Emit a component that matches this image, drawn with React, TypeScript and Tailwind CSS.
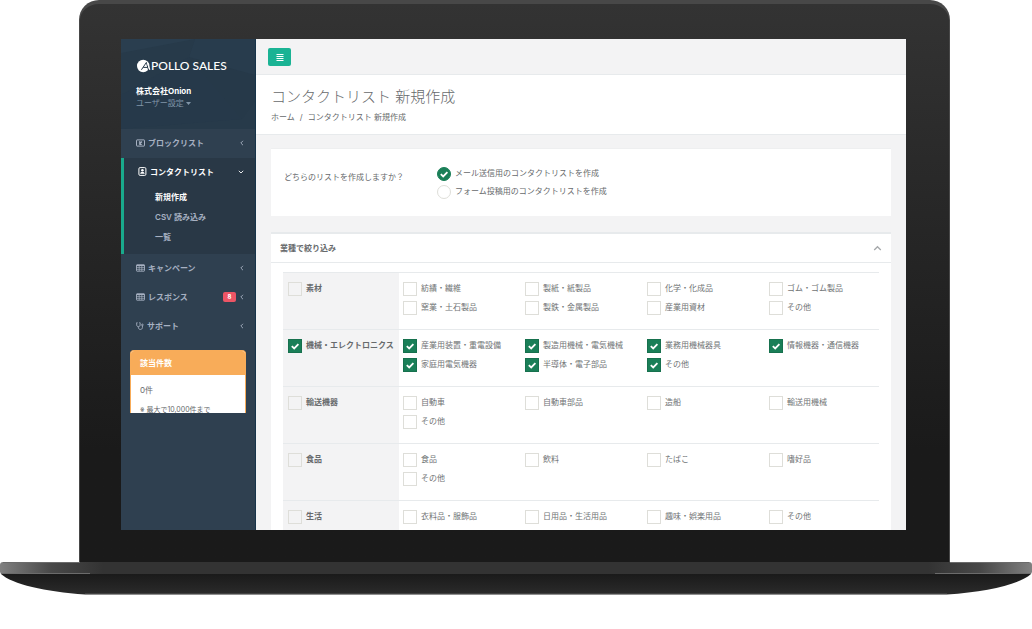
import React from "react";

type Category = {
  name: string;
  checked?: boolean;
  items: string[];
};

const categories: Category[] = [
  {
    name: "素材",
    items: ["紡績・繊維", "製紙・紙製品", "化学・化成品", "ゴム・ゴム製品", "窯業・土石製品", "製鉄・金属製品", "産業用資材", "その他"],
  },
  {
    name: "機械・エレクトロニクス",
    checked: true,
    items: ["産業用装置・重電設備", "製造用機械・電気機械", "業務用機械器具", "情報機器・通信機器", "家庭用電気機器", "半導体・電子部品", "その他"],
  },
  { name: "輸送機器", items: ["自動車", "自動車部品", "造船", "輸送用機械", "その他"] },
  { name: "食品", items: ["食品", "飲料", "たばこ", "嗜好品", "その他"] },
  { name: "生活", items: ["衣料品・服飾品", "日用品・生活用品", "趣味・娯楽用品", "その他"] },
];

function Tick() {
  return (
    <svg
      viewBox="0 0 14 14"
      className="pointer-events-none absolute inset-0 hidden size-full peer-checked:block"
      fill="none"
      stroke="#fff"
      strokeWidth="1.8"
      aria-hidden="true"
    >
      <path d="M3.8 7.1 6.2 9.4 10.4 5.2" />
    </svg>
  );
}

function CheckItem({ label, checked }: { label: string; checked?: boolean }) {
  return (
    <label className="flex items-start gap-1 whitespace-nowrap">
      <span className="relative size-3.5 shrink-0">
        <input
          type="checkbox"
          defaultChecked={checked}
          className="peer block size-3.5 appearance-none border border-[#deded9] checked:border-[#17714e] checked:bg-[#1a7f58]"
        />
        <Tick />
      </span>
      <span className="leading-3">{label}</span>
    </label>
  );
}

function RadioItem({ label, checked }: { label: string; checked?: boolean }) {
  return (
    <label className="flex items-start gap-1 whitespace-nowrap">
      <span className="relative size-3.5 shrink-0">
        <input
          type="radio"
          name="list-type"
          defaultChecked={checked}
          className="peer block size-3.5 appearance-none rounded-full border border-[#deded9] checked:border-[#1a7f58] checked:bg-[#1a7f58]"
        />
        <Tick />
      </span>
      <span className="leading-3">{label}</span>
    </label>
  );
}

function Chevron({ open }: { open?: boolean }) {
  return (
    <svg viewBox="0 0 6 6" className="size-1.5 shrink-0" fill="none" stroke="currentColor" strokeWidth="0.9" aria-hidden="true">
      <path d={open ? "M.8 1.8 3 4 5.2 1.8" : "M4 .8 1.8 3 4 5.2"} />
    </svg>
  );
}

function BlockIcon() {
  return (
    <svg viewBox="0 0 9 8" className="h-2 w-[9px] shrink-0" fill="none" stroke="currentColor" aria-hidden="true">
      <rect x=".5" y=".9" width="8" height="6.2" rx=".5" />
      <path d="M3.2 2.6 5.8 5.4M5.8 2.6 3.2 5.4" strokeWidth="1.5" />
    </svg>
  );
}

function AddressIcon() {
  return (
    <svg viewBox="0 0 9 9" className="size-[9px] shrink-0" fill="none" stroke="currentColor" aria-hidden="true">
      <rect x=".9" y=".6" width="7" height="7.8" rx="1.2" />
      <circle cx="4.4" cy="3.3" r="1.3" fill="currentColor" stroke="none" />
      <path d="M2.2 6.8c0-2.8 4.4-2.8 4.4 0z" fill="currentColor" stroke="none" />
    </svg>
  );
}

function TableIcon() {
  return (
    <svg viewBox="0 0 9 8" className="h-2 w-[9px] shrink-0" fill="none" stroke="currentColor" aria-hidden="true">
      <rect x=".5" y=".8" width="8" height="6.4" rx=".5" strokeWidth=".9" />
      <path d="M.5 1.4h8" strokeWidth="1.2" />
      <path d="M3.2 1v6M5.8 1v6M.5 3.4h8M.5 5.3h8" strokeWidth=".7" />
    </svg>
  );
}

function SupportIcon() {
  return (
    <svg viewBox="0 0 8 8" className="size-2 shrink-0" fill="none" stroke="currentColor" strokeWidth=".9" aria-hidden="true">
      <path d="M1.5.7H.7v2.2c0 2.4 3.4 2.4 3.4 0V.7h-.8M2.4 4.7v.8c0 2.6 4 2.6 4 0V3.8" />
      <circle cx="6.4" cy="2.9" r=".8" />
    </svg>
  );
}

function NavLink({ icon, label, badge }: { icon: React.ReactNode; label: string; badge?: string }) {
  return (
    <a href="#" className="flex h-[29px] items-center gap-[3px] pr-2.5 pb-0.5 pl-[15px] font-semibold">
      {icon}
      <span className="flex-1">{label}</span>
      {badge && (
        <span className="flex h-2.5 w-[13px] items-center justify-center rounded-xs bg-[#ed5565] text-[6px] font-bold text-white">
          {badge}
        </span>
      )}
      <Chevron />
    </a>
  );
}

function Sidebar() {
  return (
    <aside className="flex w-[135px] shrink-0 flex-col border-r border-[#17344a] bg-[#2f4050] text-[#a7b1c2]">
      <header className="relative h-[90px] overflow-hidden bg-[#273a4a] pt-[19px] pl-[15px]">
        <svg viewBox="0 0 134 90" preserveAspectRatio="none" className="absolute inset-0 size-full" aria-hidden="true">
          <path d="M0 14 74 0H0z" fill="#2a3e4f" />
          <path d="M74 0 68 18 121 80 134 62V0z" fill="#263949" />
          <path d="M68 18 134 36V0H74z" fill="#283c4d" />
          <path d="M0 90 121 80 68 18 0 56z" fill="#26394a" />
        </svg>
        <div className="relative">
          <a href="#" className="flex h-4 items-center text-white">
            <svg viewBox="0 0 15 14" className="h-3.5 w-[15px]" aria-hidden="true">
              <circle cx="7.2" cy="7" r="6.2" fill="#fff" />
              <path d="M5.4 10.8 10.4 3.4 12.4 10.8M7.2 8.4h4.6" fill="none" stroke="#273a4a" strokeWidth="1" />
              <path d="M11.4 3.4 13.8 10.8" fill="none" stroke="#fff" strokeWidth="1.2" />
            </svg>
            <span className="font-['Lato','Noto_Sans_CJK_JP',sans-serif] text-xs leading-4 font-medium">POLLO SALES</span>
          </a>
          <p className="mt-[11px] leading-3 font-bold text-white">株式会社Onion</p>
          <button type="button" className="flex items-center gap-0.5 leading-3 text-[#8095a8]">
            ユーザー設定
            <svg viewBox="0 0 5 3" className="h-[3px] w-[5px]" fill="currentColor" aria-hidden="true">
              <path d="M0 0h5L2.5 3z" />
            </svg>
          </button>
        </div>
      </header>
      <nav>
        <NavLink icon={<BlockIcon />} label="ブロックリスト" />
        <div className="h-24 border-l-3 border-[#19aa8d] bg-[#293846]">
          <a href="#" className="flex h-[29px] items-center gap-[3px] pr-[11px] pb-0.5 pl-3.5 font-bold text-white">
            <AddressIcon />
            <span className="flex-1">コンタクトリスト</span>
            <Chevron open />
          </a>
          <ul className="pl-[31px] leading-5 font-semibold">
            <li><a href="#" className="font-bold text-white">新規作成</a></li>
            <li><a href="#">CSV 読み込み</a></li>
            <li><a href="#">一覧</a></li>
          </ul>
        </div>
        <NavLink icon={<TableIcon />} label="キャンペーン" />
        <NavLink icon={<TableIcon />} label="レスポンス" badge="8" />
        <NavLink icon={<SupportIcon />} label="サポート" />
      </nav>
      <section className="mx-[9px] mt-[9px] h-[63px] shrink-0 overflow-hidden rounded-t-sm border-x border-t border-[#f8ac59] bg-white text-[#676a6c]">
        <h2 className="bg-[#f8ac59] pl-[9px] leading-6 font-bold text-white">該当件数</h2>
        <p className="mt-[9px] pl-[9px] leading-3">0件</p>
        <p className="mt-2 pl-[9px] text-[7px] leading-3">※ 最大で10,000件まで</p>
      </section>
    </aside>
  );
}

function Content() {
  return (
    <main className="min-w-0 flex-1 bg-[#f3f3f4] text-[#676a6c]">
      <div className="border-b border-[#e7eaec] px-3 pt-[9px] pb-2">
        <button
          type="button"
          aria-label="メニュー"
          className="flex h-[18px] w-[23px] items-center justify-center rounded-xs bg-[#1ab394] text-white"
        >
          <svg viewBox="0 0 8 8" className="size-2" fill="currentColor" aria-hidden="true">
            <path d="M.5 1h7v1h-7zM.5 3h7v1h-7zM.5 5h7v1h-7zM.5 7h7v1h-7z" />
          </svg>
        </button>
      </div>
      <div className="h-[60px] border-b border-[#e7eaec] bg-white px-[15px] pt-3">
        <h1 className="text-[15px] leading-5 font-light">コンタクトリスト 新規作成</h1>
        <nav className="mt-1 flex gap-[5px] leading-3">
          <a href="#">ホーム</a>
          <span>/</span>
          <span>コンタクトリスト 新規作成</span>
        </nav>
      </div>
      <div className="flex flex-col gap-4 p-[15px] pt-[13px]">
        <fieldset className="flex h-[68px] border-t border-[#eeeff0] bg-white px-[13px]">
          <span className="w-[153px] pt-[22px] leading-3">どちらのリストを作成しますか？</span>
          <div className="flex flex-col gap-1 pt-[18px]">
            <RadioItem label="メール送信用のコンタクトリストを作成" checked />
            <RadioItem label="フォーム投稿用のコンタクトリストを作成" />
          </div>
        </fieldset>
        <section className="border-t-2 border-[#e7eaec] bg-white">
          <header className="flex h-[29px] items-center justify-between border-b border-[#e7eaec] px-[9px]">
            <h2 className="leading-3 font-bold">業種で絞り込み</h2>
            <button type="button" aria-label="折りたたむ" className="text-[#a5a8aa]">
              <svg viewBox="0 0 9 6" className="h-1.5 w-[9px]" fill="none" stroke="currentColor" strokeWidth="1.3" aria-hidden="true">
                <path d="M1.2 5 4.5 1.7 7.8 5" />
              </svg>
            </button>
          </header>
          <div className="px-3 py-[9px]">
            <table className="w-full table-fixed border-separate border-spacing-0">
              <tbody>
                {categories.map((category) => (
                  <tr key={category.name} className="h-[57px]">
                    <th className="w-[116px] border-t border-[#e7eaec] bg-[#f3f3f4] px-[5px] pt-[9px] text-left align-top font-bold">
                      <CheckItem label={category.name} checked={category.checked} />
                    </th>
                    <td className="border-t border-[#e7eaec] pt-[9px] pl-1 align-top text-[#707375]">
                      <div className="-mr-3 grid grid-cols-4 gap-y-[5px]">
                        {category.items.map((item) => (
                          <CheckItem key={item} label={item} checked={category.checked} />
                        ))}
                      </div>
                    </td>
                  </tr>
                ))}
              </tbody>
            </table>
          </div>
        </section>
      </div>
    </main>
  );
}

function LaptopBase() {
  return (
    <svg viewBox="0 0 1032 33" preserveAspectRatio="none" className="block h-[33px] w-full" aria-hidden="true">
      <defs>
        <linearGradient id="bar">
          <stop offset="0" stopColor="#808080" />
          <stop offset=".05" stopColor="#484848" />
          <stop offset=".1" stopColor="#333333" />
          <stop offset=".9" stopColor="#333333" />
          <stop offset=".95" stopColor="#484848" />
          <stop offset="1" stopColor="#808080" />
        </linearGradient>
        <linearGradient id="underside" x2="0" y2="1">
          <stop offset="0" stopColor="#1a1a1a" />
          <stop offset="1" stopColor="#2b2b2b" />
        </linearGradient>
      </defs>
      <path d="M1 12C12 22 45 30 85 32.4H947C987 30 1020 22 1031 12z" fill="url(#underside)" />
      <path d="M85 32.2H947" stroke="#8a8a8a" strokeWidth=".8" />
      <path d="M3 0H1029Q1032 0 1032 3V10L1031 12H1L0 10V3Q0 0 3 0z" fill="url(#bar)" />
      <path d="M3 .5H80M950 .5H1029M1 11.5H90M935 11.5H1031" stroke="#6b6b6b" />
    </svg>
  );
}

export default function App() {
  return (
    <div className="min-h-screen bg-white font-['Inter','Noto_Sans_CJK_JP',sans-serif] text-[8px]" lang="ja">
      <div className="mr-[82px] ml-[79px] rounded-t-[20px] border-x border-t-4 border-[#484848] bg-linear-to-b from-[#333333] to-[#1a1a1a] to-80% pt-[35px] pr-[43px] pb-8 pl-[41px]">
        <div className="flex aspect-[785/491] overflow-hidden bg-[#f3f3f4]">
          <Sidebar />
          <Content />
        </div>
      </div>
      <LaptopBase />
    </div>
  );
}
